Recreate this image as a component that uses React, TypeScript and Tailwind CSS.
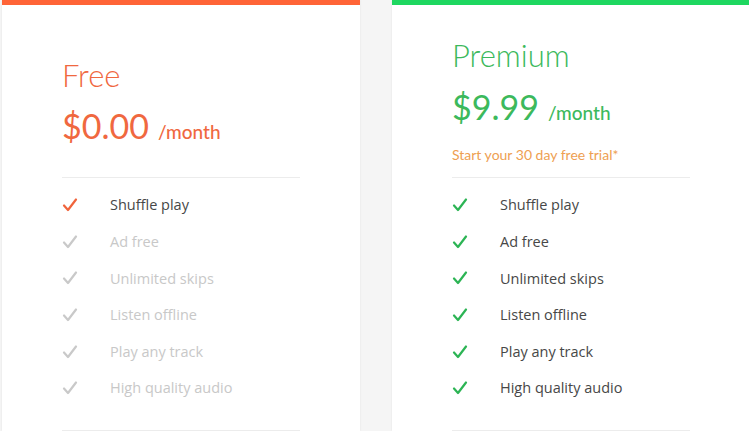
import { ReactNode } from "react";

const FEATURES = [
  "Shuffle play",
  "Ad free",
  "Unlimited skips",
  "Listen offline",
  "Play any track",
  "High quality audio",
];

function Check({ color }: { color: string }) {
  return (
    <svg width="16" height="14" viewBox="0 0 16 14" fill="none" className={color}>
      <path d="M2 7.5 L6 12 L14 1.5" stroke="currentColor" strokeWidth="2.2" strokeLinecap="round" strokeLinejoin="round" />
    </svg>
  );
}

function PlanCard({
  bar,
  header,
  included,
  accent,
}: {
  bar: string;
  header: ReactNode;
  included: number;
  accent: string;
}) {
  return (
    <div className="w-[358px] shrink-0 bg-white shadow-[0_0_2px_rgba(0,0,0,0.08)] flex flex-col">
      <div className={`h-[5px] ${bar}`} />
      <div className="px-[60px]">
        <div className="h-[173px] border-b border-[#ececec]">{header}</div>
        <ul className="pt-[9px] pb-[23px] border-b border-[#ececec] font-['Open_Sans',sans-serif]">
          {FEATURES.map((f, i) => {
            const on = i < included;
            return (
              <li key={f} className="h-[36.6px] flex items-center">
                <span className="w-12 flex">
                  <Check color={on ? accent : "text-[#c9c9c9]"} />
                </span>
                <span className={`text-[14.5px] ${on ? "text-[#474747]" : "text-[#c8c8c8]"}`}>{f}</span>
              </li>
            );
          })}
        </ul>
      </div>
    </div>
  );
}

export default function App() {
  return (
    <div className="w-[749px] h-[431px] overflow-hidden bg-[#f5f5f5] flex gap-8 pl-[2px] font-['Lato',sans-serif]">
      <PlanCard
        bar="bg-[#ff6437]"
        accent="text-[#f0643c]"
        included={1}
        header={
          <div className="pt-[50px] text-[#f0683f]">
            <h2 className="text-[31px] leading-[40px] font-light">Free</h2>
            <div className="mt-[11px] flex items-baseline gap-[9px]">
              <span className="text-[34px] leading-[40px]">$0.00</span>
              <span className="text-[19px] font-medium">/month</span>
            </div>
          </div>
        }
      />
      <PlanCard
        bar="bg-[#1ed760]"
        accent="text-[#2cb454]"
        included={6}
        header={
          <div className="pt-[30px] text-[#3cb95c]">
            <h2 className="text-[31px] leading-[40px] font-light">Premium</h2>
            <div className="mt-[12px] flex items-baseline gap-[9px]">
              <span className="text-[34px] leading-[40px]">$9.99</span>
              <span className="text-[19px] font-medium">/month</span>
            </div>
            <p className="mt-[16px] text-[14px] text-[#eea052]">Start your 30 day free trial*</p>
          </div>
        }
      />
    </div>
  );
}
